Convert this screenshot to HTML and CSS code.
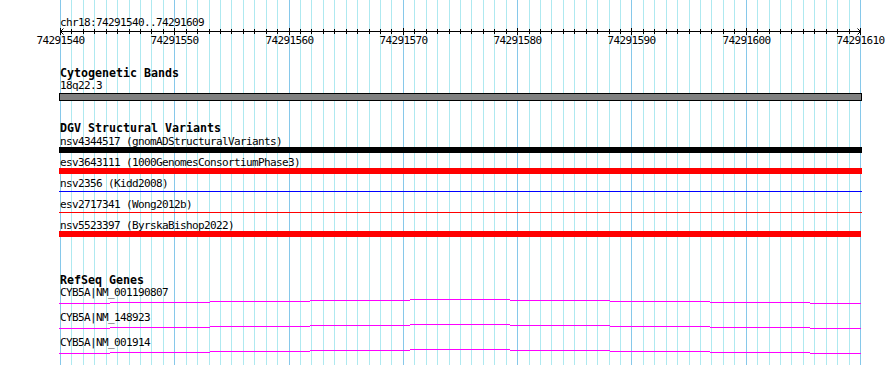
FILE: index.html
```html
<!DOCTYPE html>
<html>
<head>
<meta charset="utf-8">
<title>chr18:74291540..74291609</title>
<link rel="stylesheet" href="styles.css">
</head>
<body>
<div class="page">
  <svg class="grid" width="890" height="365" viewBox="0 0 890 365" shape-rendering="crispEdges">
    <path class="grid-minor" d="M71.5 0V365M83.5 0V365M94.5 0V365M106.5 0V365M117.5 0V365M129.5 0V365M140.5 0V365M151.5 0V365M163.5 0V365M186.5 0V365M197.5 0V365M209.5 0V365M220.5 0V365M231.5 0V365M243.5 0V365M254.5 0V365M266.5 0V365M277.5 0V365M300.5 0V365M311.5 0V365M323.5 0V365M334.5 0V365M346.5 0V365M357.5 0V365M369.5 0V365M380.5 0V365M391.5 0V365M414.5 0V365M426.5 0V365M437.5 0V365M449.5 0V365M460.5 0V365M471.5 0V365M483.5 0V365M494.5 0V365M506.5 0V365M529.5 0V365M540.5 0V365M551.5 0V365M563.5 0V365M574.5 0V365M586.5 0V365M597.5 0V365M609.5 0V365M620.5 0V365M643.5 0V365M654.5 0V365M666.5 0V365M677.5 0V365M689.5 0V365M700.5 0V365M711.5 0V365M723.5 0V365M734.5 0V365M757.5 0V365M769.5 0V365M780.5 0V365M791.5 0V365M803.5 0V365M814.5 0V365M826.5 0V365M837.5 0V365M849.5 0V365"/>
    <path class="grid-major" d="M60.5 0V365M174.5 0V365M289.5 0V365M403.5 0V365M517.5 0V365M631.5 0V365M746.5 0V365M860.5 0V365"/>
  </svg>

  <div class="content">
    <div class="locus">chr18:74291540..74291609</div>

    <svg class="ruler" width="890" height="20" viewBox="0 0 890 20">
      <g shape-rendering="crispEdges" class="ruler-lines">
        <path d="M60 3.5H861"/>
        <path d="M71.5 1V6M83.5 1V6M94.5 1V6M106.5 1V6M117.5 1V6M129.5 1V6M140.5 1V6M151.5 1V6M163.5 1V6M186.5 1V6M197.5 1V6M209.5 1V6M220.5 1V6M231.5 1V6M243.5 1V6M254.5 1V6M266.5 1V6M277.5 1V6M300.5 1V6M311.5 1V6M323.5 1V6M334.5 1V6M346.5 1V6M357.5 1V6M369.5 1V6M380.5 1V6M391.5 1V6M414.5 1V6M426.5 1V6M437.5 1V6M449.5 1V6M460.5 1V6M471.5 1V6M483.5 1V6M494.5 1V6M506.5 1V6M529.5 1V6M540.5 1V6M551.5 1V6M563.5 1V6M574.5 1V6M586.5 1V6M597.5 1V6M609.5 1V6M620.5 1V6M643.5 1V6M654.5 1V6M666.5 1V6M677.5 1V6M689.5 1V6M700.5 1V6M711.5 1V6M723.5 1V6M734.5 1V6M757.5 1V6M769.5 1V6M780.5 1V6M791.5 1V6M803.5 1V6M814.5 1V6M826.5 1V6M837.5 1V6M849.5 1V6"/>
        <path d="M60.5 0V7M174.5 0V7M289.5 0V7M403.5 0V7M517.5 0V7M631.5 0V7M746.5 0V7M860.5 0V7"/>
      </g>
      <path class="ruler-arrow" d="M63.5 0.5L60.5 3.5L63.5 6.5M857.5 0.5L860.5 3.5L857.5 6.5"/>
      <g class="ruler-labels">
        <text x="60.5" y="16">74291540</text>
        <text x="174.5" y="16">74291550</text>
        <text x="289.5" y="16">74291560</text>
        <text x="403.5" y="16">74291570</text>
        <text x="517.5" y="16">74291580</text>
        <text x="631.5" y="16">74291590</text>
        <text x="746.5" y="16">74291600</text>
        <text x="860.5" y="16">74291610</text>
      </g>
    </svg>

    <section class="track track-cyto">
      <div class="track-title">Cytogenetic Bands</div>
      <div class="band-label">18q22.3</div>
      <div class="band"></div>
    </section>

    <section class="track track-dgv">
      <div class="track-title">DGV Structural Variants</div>
      <div class="sv-label">nsv4344517 (gnomADStructuralVariants)</div>
      <div class="sv-bar thick black"></div>
      <div class="sv-label">esv3643111 (1000GenomesConsortiumPhase3)</div>
      <div class="sv-bar thick red"></div>
      <div class="sv-label">nsv2356 (Kidd2008)</div>
      <div class="sv-bar thin blue"></div>
      <div class="sv-label">esv2717341 (Wong2012b)</div>
      <div class="sv-bar thin red"></div>
      <div class="sv-label">nsv5523397 (ByrskaBishop2022)</div>
      <div class="sv-bar thick red short"></div>
    </section>

    <section class="track track-refseq">
      <div class="track-title">RefSeq Genes</div>
      <div class="gene-label">CYB5A|NM_001190807</div>
      <svg class="hat" width="803" height="8" viewBox="0 0 803 8" shape-rendering="crispEdges"><path d="M0 5.5H51M51 4.5H151M151 3.5H251M251 2.5H351M351 1.5H451M451 2.5H551M551 3.5H651M651 4.5H751M751 5.5H802"/></svg>
      <div class="gene-label">CYB5A|NM_148923</div>
      <svg class="hat" width="803" height="8" viewBox="0 0 803 8" shape-rendering="crispEdges"><path d="M0 5.5H51M51 4.5H151M151 3.5H251M251 2.5H351M351 1.5H451M451 2.5H551M551 3.5H651M651 4.5H751M751 5.5H802"/></svg>
      <div class="gene-label">CYB5A|NM_001914</div>
      <svg class="hat" width="803" height="8" viewBox="0 0 803 8" shape-rendering="crispEdges"><path d="M0 5.5H51M51 4.5H151M151 3.5H251M251 2.5H351M351 1.5H451M451 2.5H551M551 3.5H651M651 4.5H751M751 5.5H802"/></svg>
    </section>
  </div>
</div>
</body>
</html>
```

FILE: styles.css
```css
html, body {
  margin: 0;
  padding: 0;
  background: #ffffff;
}

.page {
  position: relative;
  width: 890px;
  height: 365px;
  overflow: hidden;
  background: #ffffff;
  color: #000000;
  font-family: "DejaVu Sans Mono", "Liberation Mono", monospace;
  font-size: 11px;
  letter-spacing: -0.62px;
}

.grid {
  position: absolute;
  left: 0;
  top: 0;
}

.grid-minor {
  stroke: #aee9f0;
  stroke-width: 1;
  fill: none;
}

.grid-major {
  stroke: #86c8ea;
  stroke-width: 1;
  fill: none;
}

.content {
  position: relative;
  padding-top: 17px;
}

.locus {
  padding-left: 60px;
  height: 11px;
  line-height: 11px;
  white-space: pre;
}

.ruler {
  display: block;
}

.ruler-lines path {
  stroke: #000000;
  stroke-width: 1;
  fill: none;
}

.ruler-arrow {
  stroke: #000000;
  stroke-width: 1;
  fill: none;
}

.ruler-labels text {
  font-family: "DejaVu Sans Mono", "Liberation Mono", monospace;
  font-size: 11px;
  letter-spacing: -0.62px;
  fill: #000000;
  text-anchor: middle;
}

.track {
  padding-left: 60px;
  padding-bottom: 0.02px;
}

.track-title {
  font-weight: bold;
  font-size: 11.63px;
  letter-spacing: 0;
  height: 14px;
  line-height: 14px;
  white-space: pre;
}

.track-cyto {
  margin-top: 18px;
}

.band-label {
  margin-top: 1px;
  height: 10px;
  line-height: 10px;
}

.band {
  margin: 2px 0 0 -1px;
  width: 801px;
  height: 6px;
  border: 1px solid #000000;
  background: #808080;
}

.track-dgv {
  margin-top: 20px;
}

.sv-label {
  height: 12px;
  line-height: 13px;
  white-space: pre;
}

.sv-bar {
  margin-left: -1px;
  width: 803px;
}

.sv-bar.thick {
  height: 6px;
  margin-bottom: 3px;
}

.sv-bar.thin {
  height: 1px;
  margin-top: 2px;
  margin-bottom: 6px;
}

.sv-bar.short {
  width: 802px;
}

.black { background: #000000; }
.red { background: #ff0000; }
.blue { background: #0000ff; }

.track-refseq {
  margin-top: 33px;
}

.gene-label {
  height: 11px;
  line-height: 11px;
  white-space: pre;
}

.hat {
  display: block;
  margin-left: -1px;
  margin-bottom: 6px;
}

.hat path {
  stroke: #ff00ff;
  stroke-width: 1;
  fill: none;
}
```
